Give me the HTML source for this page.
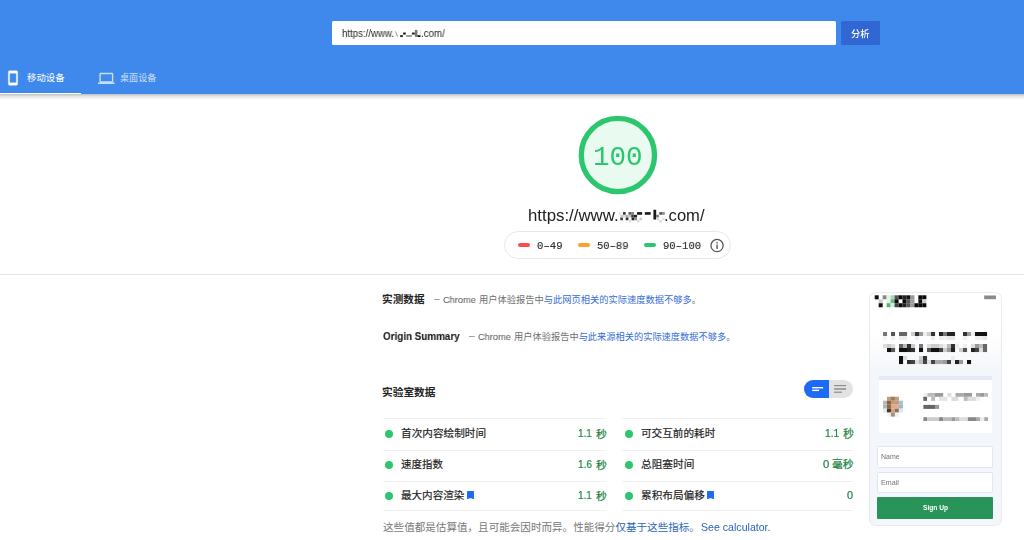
<!DOCTYPE html><html lang="zh-CN"><head><meta charset="utf-8"><title>PageSpeed Insights</title><style>
html,body{margin:0;padding:0;background:#fff}
body{width:1024px;height:540px;position:relative;overflow:hidden;font-family:"Liberation Sans",sans-serif}
.ab,.t,.cj{position:absolute;display:block;margin:0;padding:0}
.t{line-height:1;white-space:pre;transform-origin:0 0;will-change:transform}
.mono{font-family:"Liberation Mono",monospace}
.cj{border:0;background:none;font:inherit;text-decoration:none}
.cj svg{display:block;width:100%;height:100%;overflow:visible}
.cj svg text{font-family:"Liberation Sans","Noto Sans CJK SC",sans-serif;font-size:1000px}
.hd{position:absolute;left:0;top:0;width:1024px;height:94px;background:#3f89ed}
.shadow{left:0;top:94px;width:1024px;height:6px;background:linear-gradient(rgba(0,0,0,.25),rgba(0,0,0,.1) 40%,rgba(0,0,0,0))}
.inp{background:#fff;border-radius:1.5px}
.btn{border-radius:1.5px}
.pill{box-sizing:border-box;border:1px solid #e8e8e8;border-radius:14px;background:#fff}
.dash{width:12px;height:4.2px;border-radius:2.1px}
.dot{width:8px;height:8px;border-radius:50%;background:#2bc66d}
.tog{background:#e2e2e2;border-radius:9.4px;overflow:hidden}
.tog i{display:block;height:100%}
.phone{box-sizing:border-box;border:1px solid #ebebeb;border-radius:6.5px;background:linear-gradient(#fff 0,#fff 40px,#f3f6fa 80px,#f3f6fa 100%)}
.fld{box-sizing:border-box;background:#fff;border:1px solid #e3e6f0;border-radius:1.5px}
</style></head><body><header class="hd"><form class="ab" role="search"><div class="ab inp" style="left:332px;top:21.3px;width:503.6px;height:23.8px"></div><span class="t" style="left:341.63px;top:29.00px;font-size:10.00px;color:#262626;transform:scaleX(0.9650);">https://www.</span><svg class="ab" aria-hidden="true" style="left:393px;top:28px;" width="30" height="11" viewBox="393 28 30 11"><rect x="400.21" y="35.18" width="2.60" height="1.80" fill="#111"/><rect x="403.14" y="32.54" width="2.60" height="2.00" fill="#111"/><rect x="406.07" y="35.18" width="5.90" height="1.60" fill="#888"/><rect x="411.93" y="32.54" width="2.90" height="2.00" fill="#222"/><rect x="414.86" y="29.91" width="2.60" height="7.00" fill="#777"/><rect x="417.49" y="35.18" width="3.20" height="1.80" fill="#111"/><rect x="420.42" y="29.91" width="0.60" height="6.80" fill="#ccc"/></svg><svg class="ab" aria-hidden="true" style="left:394px;top:30px" width="5" height="8" viewBox="394 30 5 8"><path d="M395.4 31.4L397.7 36.5" stroke="#8a8a8a" stroke-width="0.9" fill="none"/></svg><span class="t" style="left:421.21px;top:29.00px;font-size:10.00px;color:#262626;transform:scaleX(0.9730);">.com/</span><div class="ab btn" style="left:841px;top:21.3px;width:39.3px;height:23.8px;background:#3067d2"></div><button class="cj" style="left:851.34px;top:28.87px;width:18.51px;height:9.26px;"><svg viewBox="0 -880 2000 1000"><text x="0" y="0" fill="#fff" font-weight="500">分析</text></svg></button></form><nav class="ab"><svg class="ab" aria-hidden="true" style="left:5.3px;top:70.4px" width="16" height="16" viewBox="0 0 24 24"><path fill="#fff" stroke="#fff" stroke-width=".5" d="M17 1.01L7 1c-1.1 0-1.99.9-1.99 2v18c0 1.1.89 2 1.99 2h10c1.1 0 2-.9 2-2V3c0-1.1-.9-1.99-2-1.99zM17 19H7V5h10v14z"/></svg><a class="cj" style="left:26.59px;top:72.79px;width:37.66px;height:9.42px;"><svg viewBox="0 -880 4000 1000"><text x="0" y="0" fill="#fff">移动设备</text></svg></a><div class="ab" style="left:0;top:92.7px;width:81.1px;height:1.4px;background:#fff"></div><svg class="ab" aria-hidden="true" style="left:98px;top:70.2px;opacity:.72" width="16.7" height="16.7" viewBox="0 0 24 24"><path fill="#fff" d="M20 18c1.1 0 2-.9 2-2V6c0-1.1-.9-2-2-2H4c-1.1 0-2 .9-2 2v10c0 1.1.9 2 2 2H0v2h24v-2h-4zM4 6h16v10H4V6z"/></svg><a class="cj" style="left:120.46px;top:72.94px;width:36.48px;height:9.12px;opacity:.72;"><svg viewBox="0 -880 4000 1000"><text x="0" y="0" fill="#fff">桌面设备</text></svg></a></nav></header><div class="ab shadow"></div><main><svg class="ab" aria-hidden="true" style="left:576px;top:113px" width="84" height="84" viewBox="576 113 84 84"><circle cx="617.9" cy="155" r="36.65" fill="#e9faf0" stroke="#2bc66d" stroke-width="5.3"/></svg><span class="t score mono" style="left:593.41px;top:144.00px;font-size:27.60px;color:#2bc66d;">100</span><span class="t" style="left:527.73px;top:207.00px;font-size:16.20px;color:#212121;transform:scaleX(1.0383);">https://www.</span><svg class="ab" aria-hidden="true" style="left:617px;top:208px;" width="50" height="16" viewBox="617 208 50 16"><rect x="619.06" y="212.11" width="1.56" height="2.66" fill="#ddd"/><rect x="622.97" y="212.11" width="2.73" height="2.66" fill="#333"/><rect x="628.44" y="212.11" width="2.73" height="2.66" fill="#555"/><rect x="631.17" y="212.11" width="2.73" height="2.66" fill="#777"/><rect x="637.03" y="212.11" width="5.08" height="2.66" fill="#1a1a1a"/><rect x="644.84" y="212.11" width="5.86" height="2.66" fill="#1a1a1a"/><rect x="653.44" y="209.77" width="2.73" height="9.77" fill="#1a1a1a"/><rect x="659.30" y="212.11" width="2.73" height="2.66" fill="#555"/><rect x="662.03" y="212.11" width="2.73" height="2.66" fill="#888"/><rect x="620.23" y="214.84" width="2.73" height="2.66" fill="#ccc"/><rect x="622.97" y="214.84" width="2.73" height="2.66" fill="#ddd"/><rect x="625.70" y="214.84" width="2.73" height="2.66" fill="#aaa"/><rect x="628.44" y="214.84" width="2.73" height="2.66" fill="#ccc"/><rect x="631.17" y="214.84" width="2.73" height="2.66" fill="#444"/><rect x="633.91" y="214.84" width="3.12" height="2.66" fill="#222"/><rect x="656.17" y="214.84" width="2.73" height="2.66" fill="#777"/><rect x="620.23" y="217.58" width="2.73" height="2.66" fill="#444"/><rect x="625.70" y="217.58" width="2.73" height="2.66" fill="#333"/><rect x="631.56" y="217.58" width="2.73" height="2.66" fill="#222"/><rect x="634.30" y="217.58" width="2.73" height="2.66" fill="#888"/><rect x="639.38" y="217.58" width="2.73" height="2.66" fill="#ccc"/><rect x="656.56" y="217.58" width="2.73" height="2.66" fill="#ddd"/><rect x="662.03" y="217.58" width="2.73" height="2.66" fill="#e5e5e5"/><rect x="628.83" y="219.92" width="2.34" height="2.66" fill="#ddd"/><rect x="637.03" y="219.92" width="2.34" height="2.66" fill="#ddd"/><rect x="659.30" y="219.92" width="2.73" height="2.66" fill="#ddd"/></svg><span class="t" style="left:664.29px;top:207.00px;font-size:16.20px;color:#212121;transform:scaleX(1.0229);">.com/</span><div class="ab pill" style="left:504.2px;top:231.3px;width:226.6px;height:27.8px"></div><div class="ab dash" style="left:518.1px;top:243.3px;background:#fb4b4b"></div><span class="t mono" style="left:536.95px;top:241.00px;font-size:10.60px;color:#2c2c2c;transform:scaleX(1.0055);-webkit-text-stroke:.12px;">0–49</span><div class="ab dash" style="left:578.2px;top:243.3px;background:#fba12c"></div><span class="t mono" style="left:597.04px;top:241.00px;font-size:10.60px;color:#2c2c2c;transform:scaleX(0.9899);-webkit-text-stroke:.12px;">50–89</span><div class="ab dash" style="left:644.4px;top:243.3px;background:#2bc66d"></div><span class="t mono" style="left:663.07px;top:241.00px;font-size:10.60px;color:#2c2c2c;-webkit-text-stroke:.12px;">90–100</span><svg class="ab" aria-hidden="true" style="left:709px;top:237px" width="17" height="17" viewBox="709 237 17 17"><circle cx="717.05" cy="245.55" r="6.1" fill="none" stroke="#555" stroke-width="1.25"/><rect x="716.35" y="244.5" width="1.4" height="4.4" fill="#555"/><rect x="716.35" y="242.1" width="1.4" height="1.4" fill="#555"/></svg><div class="ab" style="left:0;top:274.3px;width:1024px;height:1px;background:#e4e4e4"></div><section><h2 class="cj" style="left:382.05px;top:293.88px;width:42.58px;height:10.65px;"><svg viewBox="0 -880 4000 1000"><text x="0" y="0" fill="#212121" font-weight="700">实测数据</text></svg></h2><span class="t" style="left:434.00px;top:294.00px;font-size:9.60px;color:#6e6e6e;transform:scaleX(1.0685);">–</span><span class="t" style="left:443.43px;top:295.00px;font-size:9.80px;color:#666;transform:scaleX(0.9433);-webkit-text-stroke:.1px;">Chrome</span><p class="cj" style="left:478.90px;top:294.77px;width:222.17px;height:9.26px;"><svg viewBox="0 -880 24000 1000"><text x="0" y="0"><tspan fill="#6e6e6e">用户体验报告中</tspan><tspan fill="#356bd7">与此网页相关的实际速度数据不够多</tspan><tspan fill="#6e6e6e">。</tspan></text></svg></p><span class="t" style="left:382.50px;top:331.00px;font-size:10.90px;color:#1c1c1c;font-weight:700;transform:scaleX(0.9052);-webkit-text-stroke:.12px;">Origin Summary</span><span class="t" style="left:468.60px;top:331.00px;font-size:9.60px;color:#6e6e6e;transform:scaleX(1.0685);">–</span><span class="t" style="left:478.03px;top:332.00px;font-size:9.80px;color:#666;transform:scaleX(0.9433);-webkit-text-stroke:.1px;">Chrome</span><p class="cj" style="left:513.50px;top:331.68px;width:221.86px;height:9.24px;"><svg viewBox="0 -880 24000 1000"><text x="0" y="0"><tspan fill="#6e6e6e">用户体验报告中</tspan><tspan fill="#356bd7">与此来源相关的实际速度数据不够多</tspan><tspan fill="#6e6e6e">。</tspan></text></svg></p></section><section><h2 class="cj" style="left:382.05px;top:386.64px;width:53.59px;height:10.72px;"><svg viewBox="0 -880 5000 1000"><text x="0" y="0" fill="#212121" font-weight="700">实验室数据</text></svg></h2><div class="ab tog" style="left:804.3px;top:379.5px;width:48.8px;height:18.6px"><i style="background:#1d6bf5;width:24.8px"></i></div><svg class="ab" aria-hidden="true" style="left:810px;top:383px;" width="40" height="12" viewBox="810 383 40 12"><rect x="812.20" y="387.00" width="10.90" height="1.40" fill="#fff"/><rect x="812.20" y="389.65" width="6.90" height="1.40" fill="#fff"/><rect x="834.10" y="385.00" width="12.00" height="1.15" fill="#8c8c8c"/><rect x="834.10" y="388.20" width="12.00" height="1.50" fill="#8c8c8c"/><rect x="834.10" y="391.60" width="7.90" height="1.20" fill="#8c8c8c"/></svg><div class="ab" style="left:382.7px;top:417.9px;width:223.4px;height:1.6px;background:#f0f0f0"></div><div class="ab" style="left:622.2px;top:417.9px;width:231.2px;height:1.6px;background:#f0f0f0"></div><div class="ab" style="left:382.7px;top:449.5px;width:223.4px;height:1.6px;background:#f0f0f0"></div><div class="ab" style="left:622.2px;top:449.5px;width:231.2px;height:1.6px;background:#f0f0f0"></div><div class="ab" style="left:382.7px;top:480.5px;width:223.4px;height:1.6px;background:#f0f0f0"></div><div class="ab" style="left:622.2px;top:480.5px;width:231.2px;height:1.6px;background:#f0f0f0"></div><div class="ab" style="left:382.7px;top:509.7px;width:223.4px;height:1.6px;background:#f0f0f0"></div><div class="ab" style="left:622.2px;top:509.7px;width:231.2px;height:1.6px;background:#f0f0f0"></div><div class="ab dot" style="left:385.2px;top:429.9px"></div><span class="cj" style="left:400.82px;top:428.27px;width:85.30px;height:10.66px;"><svg viewBox="0 -880 8000 1000"><text x="0" y="0" fill="#212121" stroke="#212121" stroke-width="16">首次内容绘制时间</text></svg></span><span class="t" style="left:578.05px;top:429.00px;font-size:10.20px;color:#198141;transform:scaleX(0.9687);-webkit-text-stroke:.18px;">1.1</span><span class="cj" style="left:595.68px;top:427.89px;width:10.81px;height:10.81px;"><svg viewBox="0 -880 1000 1000"><text x="0" y="0" fill="#198141" stroke="#198141" stroke-width="22">秒</text></svg></span><div class="ab dot" style="left:385.2px;top:460.8px"></div><span class="cj" style="left:400.96px;top:459.23px;width:42.14px;height:10.53px;"><svg viewBox="0 -880 4000 1000"><text x="0" y="0" fill="#212121" stroke="#212121" stroke-width="16">速度指数</text></svg></span><span class="t" style="left:578.04px;top:460.00px;font-size:10.20px;color:#198141;transform:scaleX(0.9804);-webkit-text-stroke:.18px;">1.6</span><span class="cj" style="left:595.68px;top:458.79px;width:10.81px;height:10.81px;"><svg viewBox="0 -880 1000 1000"><text x="0" y="0" fill="#198141" stroke="#198141" stroke-width="22">秒</text></svg></span><div class="ab dot" style="left:385.2px;top:491.7px"></div><span class="cj" style="left:400.90px;top:490.11px;width:63.48px;height:10.58px;"><svg viewBox="0 -880 6000 1000"><text x="0" y="0" fill="#212121" stroke="#212121" stroke-width="16">最大内容渲染</text></svg></span><span class="t" style="left:578.05px;top:491.00px;font-size:10.20px;color:#198141;transform:scaleX(0.9687);-webkit-text-stroke:.18px;">1.1</span><span class="cj" style="left:595.68px;top:489.69px;width:10.81px;height:10.81px;"><svg viewBox="0 -880 1000 1000"><text x="0" y="0" fill="#198141" stroke="#198141" stroke-width="22">秒</text></svg></span><div class="ab dot" style="left:624.7px;top:429.9px"></div><span class="cj" style="left:640.50px;top:428.29px;width:74.40px;height:10.63px;"><svg viewBox="0 -880 7000 1000"><text x="0" y="0" fill="#212121" stroke="#212121" stroke-width="16">可交互前的耗时</text></svg></span><span class="t" style="left:824.62px;top:429.00px;font-size:10.20px;color:#198141;-webkit-text-stroke:.18px;">1.1</span><span class="cj" style="left:842.57px;top:427.84px;width:10.92px;height:10.92px;"><svg viewBox="0 -880 1000 1000"><text x="0" y="0" fill="#198141" stroke="#198141" stroke-width="22">秒</text></svg></span><div class="ab dot" style="left:624.7px;top:460.8px"></div><span class="cj" style="left:640.64px;top:459.15px;width:53.49px;height:10.70px;"><svg viewBox="0 -880 5000 1000"><text x="0" y="0" fill="#212121" stroke="#212121" stroke-width="16">总阻塞时间</text></svg></span><span class="t" style="left:823.36px;top:460.00px;font-size:10.20px;color:#198141;transform:scaleX(1.1075);-webkit-text-stroke:.18px;">0</span><span class="cj" style="left:832.01px;top:458.83px;width:21.47px;height:10.74px;"><svg viewBox="0 -880 2000 1000"><text x="0" y="0" fill="#198141" stroke="#198141" stroke-width="22">毫秒</text></svg></span><div class="ab dot" style="left:624.7px;top:491.7px"></div><span class="cj" style="left:640.57px;top:490.07px;width:63.98px;height:10.66px;"><svg viewBox="0 -880 6000 1000"><text x="0" y="0" fill="#212121" stroke="#212121" stroke-width="16">累积布局偏移</text></svg></span><span class="t" style="left:847.38px;top:491.00px;font-size:10.20px;color:#198141;transform:scaleX(1.0665);-webkit-text-stroke:.18px;">0</span><svg class="ab" aria-hidden="true" style="left:466.95px;top:490.7px" width="7.0" height="8.3" viewBox="0 0 10 12"><path fill="#1d6bf5" d="M.6 0H9.4Q10 0 10 .6V12L5 10.2L0 12V.6Q0 0 .6 0Z"/></svg><svg class="ab" aria-hidden="true" style="left:706.7px;top:490.7px" width="7.0" height="8.3" viewBox="0 0 10 12"><path fill="#1d6bf5" d="M.6 0H9.4Q10 0 10 .6V12L5 10.2L0 12V.6Q0 0 .6 0Z"/></svg><p class="cj" style="left:382.52px;top:522.01px;width:317.42px;height:10.58px;"><svg viewBox="0 -880 30000 1000"><text x="0" y="0"><tspan fill="#787878">这些值都是估算值，且可能会因时而异。性能得分</tspan><tspan fill="#2a64b9">仅基于这些指标</tspan><tspan fill="#787878">。</tspan></text></svg></p><span class="t" style="left:701.22px;top:522.00px;font-size:10.60px;color:#2a64b9;">See calculator.</span></section><aside class="ab phone" style="left:869.2px;top:291.8px;width:132.4px;height:233.8px"></aside><svg class="ab" aria-hidden="true" style="left:870px;top:292px;" width="131" height="80" viewBox="870 292 131 80"><rect x="874.70" y="295.30" width="4.02" height="4.02" fill="#111"/><rect x="882.64" y="295.30" width="4.02" height="4.02" fill="#888"/><rect x="886.61" y="295.30" width="4.02" height="4.02" fill="#dff5e3"/><rect x="890.58" y="295.30" width="4.02" height="4.02" fill="#a8d8b0"/><rect x="894.55" y="295.30" width="4.02" height="4.02" fill="#555560"/><rect x="898.52" y="295.30" width="4.02" height="4.02" fill="#0a0a0a"/><rect x="902.49" y="295.30" width="4.02" height="4.02" fill="#222"/><rect x="906.46" y="295.30" width="4.02" height="4.02" fill="#111"/><rect x="910.43" y="295.30" width="4.02" height="4.02" fill="#999"/><rect x="918.37" y="295.30" width="4.02" height="4.02" fill="#0a0a0a"/><rect x="922.34" y="295.30" width="4.02" height="4.02" fill="#0a0a0a"/><rect x="878.67" y="299.27" width="4.02" height="4.02" fill="#ccc"/><rect x="886.61" y="299.27" width="4.02" height="4.02" fill="#dff5e3"/><rect x="890.58" y="299.27" width="4.02" height="4.02" fill="#6db880"/><rect x="894.55" y="299.27" width="4.02" height="4.02" fill="#0a0a0a"/><rect x="902.49" y="299.27" width="4.02" height="4.02" fill="#0a0a0a"/><rect x="906.46" y="299.27" width="4.02" height="4.02" fill="#555"/><rect x="910.43" y="299.27" width="4.02" height="4.02" fill="#999"/><rect x="918.37" y="299.27" width="4.02" height="4.02" fill="#111"/><rect x="922.34" y="299.27" width="4.02" height="4.02" fill="#ccc"/><rect x="878.67" y="303.24" width="4.02" height="4.02" fill="#111"/><rect x="886.61" y="303.24" width="4.02" height="4.02" fill="#5fae70"/><rect x="890.58" y="303.24" width="4.02" height="4.02" fill="#cfeed6"/><rect x="894.55" y="303.24" width="4.02" height="4.02" fill="#444"/><rect x="898.52" y="303.24" width="4.02" height="4.02" fill="#0a0a0a"/><rect x="902.49" y="303.24" width="4.02" height="4.02" fill="#222"/><rect x="906.46" y="303.24" width="4.02" height="4.02" fill="#555"/><rect x="910.43" y="303.24" width="4.02" height="4.02" fill="#999"/><rect x="914.40" y="303.24" width="4.02" height="4.02" fill="#0a0a0a"/><rect x="918.37" y="303.24" width="4.02" height="4.02" fill="#0a0a0a"/><rect x="922.34" y="303.24" width="4.02" height="4.02" fill="#0a0a0a"/><rect x="984.20" y="295.50" width="11.80" height="3.70" fill="#8a8a8a"/><rect x="883.00" y="332.00" width="4.05" height="4.05" fill="#777"/><rect x="891.00" y="332.00" width="4.05" height="4.05" fill="#555"/><rect x="899.00" y="332.00" width="4.05" height="4.05" fill="#666"/><rect x="903.00" y="332.00" width="4.05" height="4.05" fill="#666"/><rect x="911.00" y="332.00" width="4.05" height="4.05" fill="#ccc"/><rect x="915.00" y="332.00" width="4.05" height="4.05" fill="#333"/><rect x="919.00" y="332.00" width="4.05" height="4.05" fill="#999"/><rect x="923.00" y="332.00" width="4.05" height="4.05" fill="#eee"/><rect x="927.00" y="332.00" width="4.05" height="4.05" fill="#ccc"/><rect x="931.00" y="332.00" width="4.05" height="4.05" fill="#333"/><rect x="939.00" y="332.00" width="4.05" height="4.05" fill="#222"/><rect x="943.00" y="332.00" width="4.05" height="4.05" fill="#777"/><rect x="947.00" y="332.00" width="4.05" height="4.05" fill="#222"/><rect x="951.00" y="332.00" width="4.05" height="4.05" fill="#222"/><rect x="963.00" y="332.00" width="4.05" height="4.05" fill="#333"/><rect x="967.00" y="332.00" width="4.05" height="4.05" fill="#999"/><rect x="971.00" y="332.00" width="4.05" height="4.05" fill="#eee"/><rect x="975.00" y="332.00" width="4.05" height="4.05" fill="#111"/><rect x="979.00" y="332.00" width="4.05" height="4.05" fill="#111"/><rect x="983.00" y="332.00" width="4.05" height="4.05" fill="#111"/><rect x="883.00" y="336.00" width="4.05" height="4.05" fill="#f4f4f4"/><rect x="891.00" y="336.00" width="4.05" height="4.05" fill="#f0f0f0"/><rect x="899.00" y="336.00" width="4.05" height="4.05" fill="#eee"/><rect x="903.00" y="336.00" width="4.05" height="4.05" fill="#eee"/><rect x="915.00" y="336.00" width="4.05" height="4.05" fill="#eee"/><rect x="931.00" y="336.00" width="4.05" height="4.05" fill="#eee"/><rect x="939.00" y="336.00" width="4.05" height="4.05" fill="#eee"/><rect x="943.00" y="336.00" width="4.05" height="4.05" fill="#f0f0f0"/><rect x="947.00" y="336.00" width="4.05" height="4.05" fill="#e8e8e8"/><rect x="951.00" y="336.00" width="4.05" height="4.05" fill="#e8e8e8"/><rect x="963.00" y="336.00" width="4.05" height="4.05" fill="#f0f0f0"/><rect x="975.00" y="336.00" width="4.05" height="4.05" fill="#eee"/><rect x="979.00" y="336.00" width="4.05" height="4.05" fill="#eee"/><rect x="983.00" y="336.00" width="4.05" height="4.05" fill="#e5e5e5"/><rect x="883.00" y="344.00" width="4.05" height="4.05" fill="#ddd"/><rect x="887.00" y="344.00" width="4.05" height="4.05" fill="#ccc"/><rect x="891.00" y="344.00" width="4.05" height="4.05" fill="#ddd"/><rect x="899.00" y="344.00" width="4.05" height="4.05" fill="#666"/><rect x="903.00" y="344.00" width="4.05" height="4.05" fill="#bbb"/><rect x="907.00" y="344.00" width="4.05" height="4.05" fill="#333"/><rect x="911.00" y="344.00" width="4.05" height="4.05" fill="#ccc"/><rect x="919.00" y="344.00" width="4.05" height="4.05" fill="#777"/><rect x="927.00" y="344.00" width="4.05" height="4.05" fill="#ddd"/><rect x="931.00" y="344.00" width="4.05" height="4.05" fill="#ccc"/><rect x="935.00" y="344.00" width="4.05" height="4.05" fill="#ccc"/><rect x="939.00" y="344.00" width="4.05" height="4.05" fill="#ddd"/><rect x="943.00" y="344.00" width="4.05" height="4.05" fill="#eee"/><rect x="947.00" y="344.00" width="4.05" height="4.05" fill="#bbb"/><rect x="951.00" y="344.00" width="4.05" height="4.05" fill="#333"/><rect x="955.00" y="344.00" width="4.05" height="4.05" fill="#eee"/><rect x="963.00" y="344.00" width="4.05" height="4.05" fill="#eee"/><rect x="971.00" y="344.00" width="4.05" height="4.05" fill="#ddd"/><rect x="975.00" y="344.00" width="4.05" height="4.05" fill="#999"/><rect x="979.00" y="344.00" width="4.05" height="4.05" fill="#bbb"/><rect x="983.00" y="344.00" width="4.05" height="4.05" fill="#666"/><rect x="887.00" y="348.00" width="4.05" height="4.05" fill="#111"/><rect x="891.00" y="348.00" width="4.05" height="4.05" fill="#555"/><rect x="899.00" y="348.00" width="4.05" height="4.05" fill="#111"/><rect x="903.00" y="348.00" width="4.05" height="4.05" fill="#111"/><rect x="907.00" y="348.00" width="4.05" height="4.05" fill="#222"/><rect x="911.00" y="348.00" width="4.05" height="4.05" fill="#333"/><rect x="919.00" y="348.00" width="4.05" height="4.05" fill="#111"/><rect x="927.00" y="348.00" width="4.05" height="4.05" fill="#555"/><rect x="931.00" y="348.00" width="4.05" height="4.05" fill="#111"/><rect x="935.00" y="348.00" width="4.05" height="4.05" fill="#111"/><rect x="939.00" y="348.00" width="4.05" height="4.05" fill="#444"/><rect x="943.00" y="348.00" width="4.05" height="4.05" fill="#ccc"/><rect x="947.00" y="348.00" width="4.05" height="4.05" fill="#999"/><rect x="951.00" y="348.00" width="4.05" height="4.05" fill="#222"/><rect x="959.00" y="348.00" width="4.05" height="4.05" fill="#ccc"/><rect x="963.00" y="348.00" width="4.05" height="4.05" fill="#555"/><rect x="971.00" y="348.00" width="4.05" height="4.05" fill="#222"/><rect x="975.00" y="348.00" width="4.05" height="4.05" fill="#444"/><rect x="979.00" y="348.00" width="4.05" height="4.05" fill="#ddd"/><rect x="983.00" y="348.00" width="4.05" height="4.05" fill="#666"/><rect x="899.00" y="356.00" width="4.05" height="4.05" fill="#111"/><rect x="903.00" y="356.00" width="4.05" height="4.05" fill="#ddd"/><rect x="919.00" y="356.00" width="4.05" height="4.05" fill="#ccc"/><rect x="923.00" y="356.00" width="4.05" height="4.05" fill="#333"/><rect x="951.00" y="356.00" width="4.05" height="4.05" fill="#eee"/><rect x="899.00" y="360.00" width="4.05" height="4.05" fill="#111"/><rect x="907.00" y="360.00" width="4.05" height="4.05" fill="#333"/><rect x="911.00" y="360.00" width="4.05" height="4.05" fill="#444"/><rect x="915.00" y="360.00" width="4.05" height="4.05" fill="#ddd"/><rect x="919.00" y="360.00" width="4.05" height="4.05" fill="#bbb"/><rect x="923.00" y="360.00" width="4.05" height="4.05" fill="#444"/><rect x="927.00" y="360.00" width="4.05" height="4.05" fill="#ddd"/><rect x="931.00" y="360.00" width="4.05" height="4.05" fill="#444"/><rect x="935.00" y="360.00" width="4.05" height="4.05" fill="#aaa"/><rect x="939.00" y="360.00" width="4.05" height="4.05" fill="#aaa"/><rect x="943.00" y="360.00" width="4.05" height="4.05" fill="#999"/><rect x="947.00" y="360.00" width="4.05" height="4.05" fill="#444"/><rect x="951.00" y="360.00" width="4.05" height="4.05" fill="#eee"/><rect x="955.00" y="360.00" width="4.05" height="4.05" fill="#222"/><rect x="959.00" y="360.00" width="4.05" height="4.05" fill="#999"/><rect x="967.00" y="360.00" width="4.05" height="4.05" fill="#111"/></svg><div class="ab" style="left:878.9px;top:376.2px;width:113.1px;height:57px;background:#fff"></div><div class="ab" style="left:878.9px;top:376.2px;width:113.1px;height:4.1px;background:#e6e8f2"></div><svg class="ab" aria-hidden="true" style="left:880px;top:390px;" width="112" height="34" viewBox="880 390 112 34"><rect x="886.97" y="396.70" width="4.02" height="4.02" fill="#b5a090"/><rect x="890.94" y="396.70" width="4.02" height="4.02" fill="#a87850"/><rect x="894.91" y="396.70" width="4.02" height="4.02" fill="#b8a088"/><rect x="883.00" y="400.67" width="4.02" height="4.02" fill="#b8b8b0"/><rect x="886.97" y="400.67" width="4.02" height="4.02" fill="#8a6040"/><rect x="890.94" y="400.67" width="4.02" height="4.02" fill="#c89870"/><rect x="894.91" y="400.67" width="4.02" height="4.02" fill="#c09880"/><rect x="898.88" y="400.67" width="4.02" height="4.02" fill="#a8c0c8"/><rect x="883.00" y="404.64" width="4.02" height="4.02" fill="#a8b8b8"/><rect x="886.97" y="404.64" width="4.02" height="4.02" fill="#906848"/><rect x="890.94" y="404.64" width="4.02" height="4.02" fill="#e0a880"/><rect x="894.91" y="404.64" width="4.02" height="4.02" fill="#e8a8a0"/><rect x="898.88" y="404.64" width="4.02" height="4.02" fill="#98b8c0"/><rect x="883.00" y="408.61" width="4.02" height="4.02" fill="#e8e8e8"/><rect x="886.97" y="408.61" width="4.02" height="4.02" fill="#4a3828"/><rect x="890.94" y="408.61" width="4.02" height="4.02" fill="#d8a078"/><rect x="894.91" y="408.61" width="4.02" height="4.02" fill="#907060"/><rect x="898.88" y="408.61" width="4.02" height="4.02" fill="#e0e8e8"/><rect x="886.97" y="412.58" width="4.02" height="4.02" fill="#f0f0f0"/><rect x="890.94" y="412.58" width="4.02" height="4.02" fill="#a09080"/><rect x="894.91" y="412.58" width="4.02" height="4.02" fill="#f0f0f0"/><rect x="923.37" y="393.00" width="4.10" height="3.80" fill="#eee"/><rect x="927.47" y="393.00" width="7.52" height="3.80" fill="#bbb"/><rect x="934.99" y="393.00" width="8.20" height="3.80" fill="#999"/><rect x="947.30" y="393.00" width="4.10" height="3.80" fill="#ddd"/><rect x="955.50" y="393.00" width="8.20" height="3.80" fill="#aaa"/><rect x="963.71" y="393.00" width="8.20" height="3.80" fill="#999"/><rect x="976.01" y="393.00" width="4.10" height="3.80" fill="#aaa"/><rect x="980.11" y="393.00" width="4.10" height="3.80" fill="#999"/><rect x="984.22" y="393.00" width="3.83" height="3.80" fill="#bbb"/><rect x="923.37" y="396.80" width="3.69" height="4.10" fill="#666"/><rect x="931.17" y="396.80" width="3.83" height="4.10" fill="#bbb"/><rect x="939.10" y="396.80" width="8.20" height="4.10" fill="#e5e5e5"/><rect x="951.40" y="396.80" width="6.84" height="4.10" fill="#ddd"/><rect x="963.71" y="396.80" width="4.10" height="4.10" fill="#bbb"/><rect x="967.81" y="396.80" width="8.20" height="4.10" fill="#ddd"/><rect x="976.01" y="396.80" width="4.10" height="4.10" fill="#f0f0f0"/><rect x="923.37" y="404.90" width="11.62" height="4.00" fill="#666"/><rect x="934.99" y="404.90" width="4.10" height="4.00" fill="#999"/><rect x="923.37" y="417.20" width="3.69" height="3.80" fill="#888"/><rect x="927.06" y="417.20" width="12.03" height="3.80" fill="#ccc"/><rect x="939.10" y="417.20" width="4.10" height="3.80" fill="#888"/><rect x="943.20" y="417.20" width="8.20" height="3.80" fill="#bbb"/><rect x="951.40" y="417.20" width="4.10" height="3.80" fill="#999"/><rect x="955.50" y="417.20" width="4.10" height="3.80" fill="#bbb"/><rect x="959.61" y="417.20" width="8.20" height="3.80" fill="#ddd"/><rect x="967.81" y="417.20" width="8.20" height="3.80" fill="#888"/><rect x="976.01" y="417.20" width="4.10" height="3.80" fill="#aaa"/><rect x="980.11" y="417.20" width="4.10" height="3.80" fill="#eee"/><rect x="984.22" y="417.20" width="3.83" height="3.80" fill="#aaa"/></svg><div class="ab fld" style="left:877.2px;top:445.9px;width:116.1px;height:21.8px"></div><span class="t" style="left:880.73px;top:454.00px;font-size:6.30px;color:#707070;transform:scaleX(1.1057);">Name</span><div class="ab fld" style="left:877.2px;top:471.8px;width:116.1px;height:21px"></div><span class="t" style="left:880.72px;top:480.00px;font-size:6.30px;color:#707070;transform:scaleX(1.1272);">Email</span><div class="ab" style="left:877.2px;top:496.8px;width:116.1px;height:22.5px;background:#28945a;border-radius:1px"></div><span class="t" style="left:922.91px;top:505.00px;font-size:6.60px;color:#fff;font-weight:700;transform:scaleX(1.0094);">Sign Up</span></main></body></html>
